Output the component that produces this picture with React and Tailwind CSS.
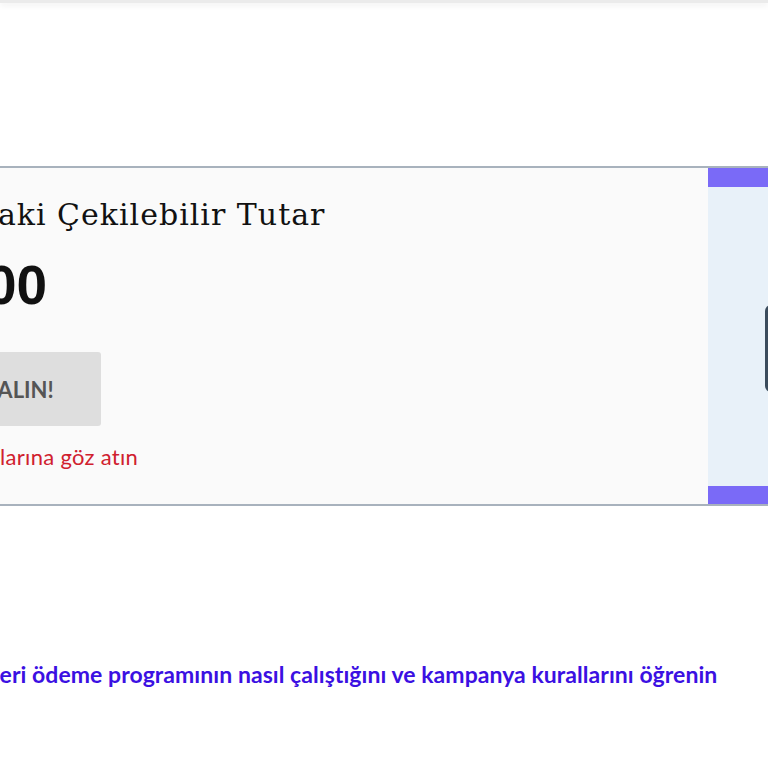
import React from 'react';

const App = () => {
    return (
        <div className="relative h-[768px] w-[768px] overflow-hidden bg-white font-['Lato','Noto_Sans',sans-serif]">
            {/* header edge */}
            <div className="h-[3px] bg-[#ebebeb] shadow-[0_2px_6px_rgba(0,0,0,0.09)]" />

            <div className="mt-[163px] -ml-[197px] flex w-[1100px] border-2 border-[#a8b2bd] bg-[#fafafa]">
                <div className="w-[903px] shrink-0 pl-[40px] pt-[29px] pb-[34px]">
                    <h2 className="-ml-[27px] whitespace-nowrap font-['DejaVu_Serif',serif] text-[30px] leading-[36px] tracking-[1px] text-[#111]">
                        Hesabınızdaki Çekilebilir Tutar
                    </h2>
                    <div className="mt-[22px] -ml-[12px] font-['Liberation_Sans',Arial,sans-serif] text-[55px] font-bold leading-[60px] text-[#111]">
                        1.250,00
                    </div>
                    <button className="mt-[37px] h-[74px] w-[256px] rounded-[3px] bg-[#dedede] text-[22px] font-bold text-[#555]">
                        PARANIZI ALIN!
                    </button>
                    <p className="mt-[18px] -ml-[3px] whitespace-nowrap text-[22px] leading-[26px] tracking-[0.3px] text-[#d0202e]">
                        Kampanya kurallarına göz atın
                    </p>
                </div>
                <div className="flex flex-1 flex-col bg-[#e8f1f9]">
                    <div className="h-[19px] bg-[#7a6af7]" />
                    <div className="flex flex-1 items-center pl-[57px] pt-[24px]">
                        <div className="h-[87px] w-[120px] rounded-l-[6px] bg-[#3b4c5d]" />
                    </div>
                    <div className="h-[18px] bg-[#7a6af7]" />
                </div>
            </div>

            <p className="mt-[154px] -ml-[17px] whitespace-nowrap text-[23px] font-bold leading-[28px] tracking-[0.05px] text-[#3b10e2]">
                Geri ödeme programının nasıl çalıştığını ve kampanya kurallarını öğrenin
            </p>
        </div>
    );
};

export default App;
